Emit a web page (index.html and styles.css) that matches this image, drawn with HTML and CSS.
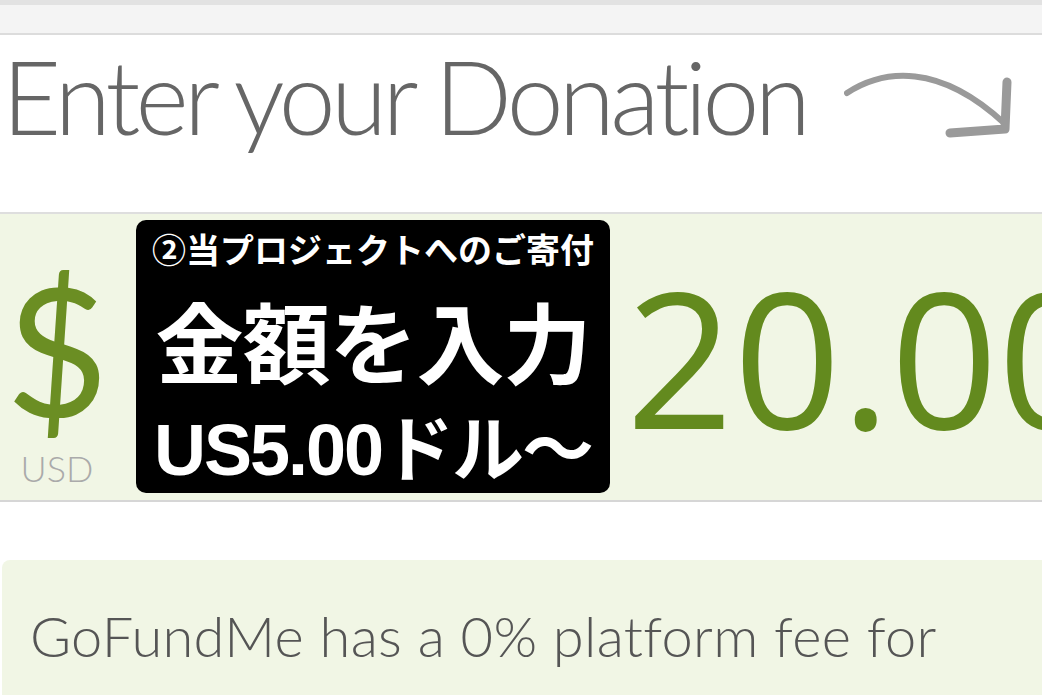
FILE: index.html
```html
<!DOCTYPE html>
<html lang="ja">
<head>
  <meta charset="UTF-8" />
  <title>Donate</title>
  <link rel="stylesheet" href="styles.css">
</head>
<body>
  <div class="topbar"></div>

  <div class="heading">
    <h1>Enter your Donation</h1>
    <svg class="arrow" width="180" height="80" viewBox="0 0 180 80">
      <path d="M3 28 C40 4 95 -2 160 58" fill="none" stroke="#9a9a9a" stroke-width="6" stroke-linecap="round" />
      <path d="M163 17 L161 64 L106 68" fill="none" stroke="#9a9a9a" stroke-width="9" stroke-linecap="round" stroke-linejoin="round" />
    </svg>
  </div>

  <div class="amount">
    <div class="currency">
      <span class="symbol">$</span>
      <span class="code">USD</span>
    </div>
    <div class="callout">
      <p class="callout-small">②当プロジェクトへのご寄付</p>
      <p class="callout-big">金額を入力</p>
      <p class="callout-mid">US5.00ドル〜</p>
    </div>
    <div class="value">20.00</div>
  </div>

  <div class="fee-box">
    <p>GoFundMe has a 0% platform fee for organizers and relies on donors</p>
  </div>
</body>
</html>
```

FILE: styles.css
```css
* {
  margin: 0;
  padding: 0;
  box-sizing: border-box;
}

html, body {
  height: 100%;
  overflow: hidden;
  background: #fff;
  font-family: 'Lato', 'Noto Sans CJK JP', sans-serif;
}

.topbar {
  height: 35px;
  background: #f4f4f4;
  border-top: 5px solid #e2e2e2;
  border-bottom: 2px solid #dcdcdc;
}

.heading {
  height: 177px;
  display: flex;
  align-items: flex-start;
  padding: 10px 0 0 2px;
  gap: 38px;
}

.heading h1 {
  font-weight: 300;
  font-size: 102px;
  line-height: 1;
  color: #666;
  letter-spacing: -4.7px;
  white-space: nowrap;
}

.arrow {
  margin-top: 20px;
  flex-shrink: 0;
}

.amount {
  height: 290px;
  background: #f1f6e5;
  border-top: 2px solid #dedede;
  border-bottom: 2px solid #d6d6d6;
  display: flex;
  align-items: flex-start;
  overflow: hidden;
}

.currency {
  width: 136px;
  flex-shrink: 0;
  display: flex;
  flex-direction: column;
  align-items: center;
  padding: 46px 22px 0 0;
}

.symbol {
  font-family: 'Lato', sans-serif;
  font-weight: 400;
  font-size: 178px;
  line-height: 176px;
  color: #6b8e23;
}

.code {
  font-weight: 300;
  font-size: 36px;
  line-height: 1;
  color: #aaa;
  margin-top: 14px;
}

.callout {
  width: 474px;
  height: 273px;
  flex-shrink: 0;
  margin-top: 6px;
  background: #000;
  border-radius: 10px;
  color: #fff;
  font-family: 'Noto Sans CJK JP', sans-serif;
  font-weight: 700;
  display: flex;
  flex-direction: column;
  align-items: center;
  padding-top: 4px;
  white-space: nowrap;
}

.callout-small {
  font-size: 34px;
  line-height: 50px;
}

.callout-big {
  font-size: 88px;
  line-height: 104px;
  letter-spacing: -1px;
  margin-top: 13px;
}

.callout-mid {
  font-family: 'Liberation Sans', 'Noto Sans CJK JP', sans-serif;
  font-size: 72px;
  line-height: 90px;
  letter-spacing: -2px;
  margin-top: 14px;
}

.value {
  font-family: 'Open Sans', sans-serif;
  font-weight: 400;
  font-size: 188px;
  line-height: 1;
  color: #638a1e;
  margin: 48px 0 0 16px;
  white-space: nowrap;
}

.fee-box {
  margin: 58px 0 0 2px;
  background: #f1f6e5;
  border-top-left-radius: 8px;
  padding: 37px 60px 0 28px;
  height: 200px;
}

.fee-box p {
  font-weight: 300;
  font-size: 56px;
  line-height: 1.4;
  color: #555;
  letter-spacing: 0.3px;
}
```
